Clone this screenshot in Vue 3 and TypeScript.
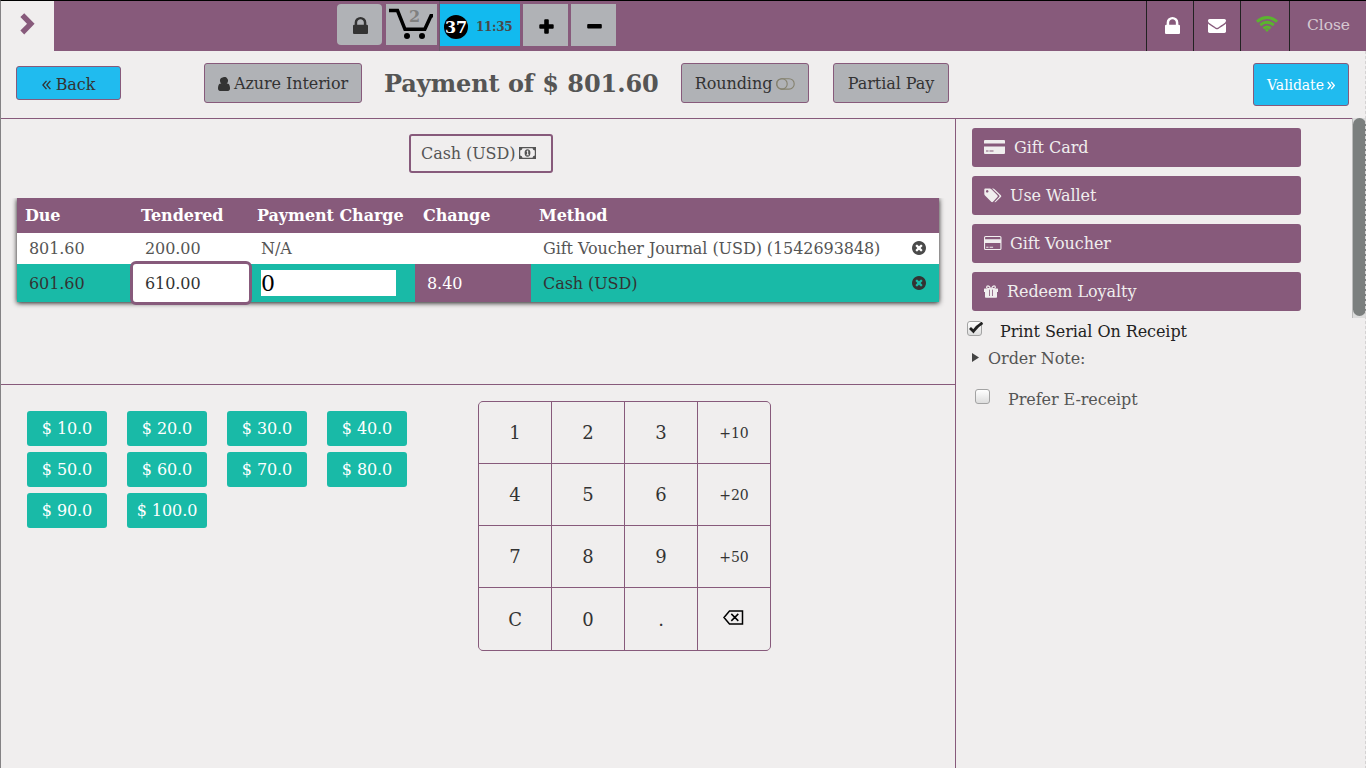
<script setup lang="ts">
const LOCK =
  'M640 768h512v-192q0-106-75-181t-181-75-181 75-75 181v192zm832 96v576q0 40-28 68t-68 28h-960q-40 0-68-28t-28-68v-576q0-40 28-68t68-28h32v-192q0-184 132-316t316-132 316 132 132 316v192h32q40 0 68 28t28 68z'
const CLOSE_CIRCLE =
  'M1277 1122q0-26-19-45l-181-181 181-181q19-19 19-45 0-27-19-46l-90-90q-19-19-46-19-26 0-45 19l-181 181-181-181q-19-19-45-19-27 0-46 19l-90 90q-19 19-19 46 0 26 19 45l181 181-181 181q-19 19-19 45 0 27 19 46l90 90q19 19 46 19 26 0 45-19l181-181 181 181q19 19 45 19 27 0 46-19l90-90q19-19 19-46zm387-226q0 209-103 385.5t-279.5 279.5-385.5 103-385.5-103-279.5-279.5-103-385.5 103-385.5 279.5-279.5 385.5-103 385.5 103 279.5 279.5 103 385.5z'

const amounts: string[] = ['10.0', '20.0', '30.0', '40.0', '50.0', '60.0', '70.0', '80.0', '90.0', '100.0']
const keys: string[] = ['1', '2', '3', '+10', '4', '5', '6', '+20', '7', '8', '9', '+50', 'C', '0', '.', 'del']
const headers: string[] = ['Due', 'Tendered', 'Payment Charge', 'Change', 'Method']
</script>

<template>
  <div class="pos">
    <header class="topbar">
      <div class="toggle">
        <svg width="15" height="22" viewBox="0 0 15 22"><path d="M2.300 2.100L10.800 10.800L2.300 19.500" fill="none" stroke="#875a7b" stroke-width="5.400" /></svg>
      </div>
      <div class="orders">
        <div class="tile lock">
          <svg width="15" height="17" viewBox="320 128 1152 1408" preserveAspectRatio="none"><path :d="LOCK" fill="#333" /></svg>
        </div>
        <div class="tile cart">
          <svg width="51" height="41" viewBox="0 0 51 41">
            <path d="M3 6.500H11.500L19 25.300H38.800L45 11.800H47" fill="none" stroke="#000" stroke-width="3.500" />
            <circle cx="21" cy="32" r="3" /><circle cx="36" cy="32" r="3" />
          </svg>
          <span class="cart-count">2</span>
        </div>
        <div class="tile current"><span class="badge">37</span><span class="time">11:35</span></div>
        <div class="tile op">
          <svg width="15" height="15" viewBox="0 0 15 15"><path d="M6.200 .2h2.600q1 0 1 1v4h3.900q1 0 1 1v2.600q0 1-1 1H9.800v4q0 1-1 1H6.200q-1 0-1-1v-4H1.300q-1 0-1-1V6.200q0-1 1-1h3.900v-4q0-1 1-1z" /></svg>
        </div>
        <div class="tile op minus">
          <svg width="15" height="15" viewBox="0 0 15 15"><rect x=".2" y="5" width="14.600" height="4.500" rx="1" /></svg>
        </div>
      </div>
      <div class="status">
        <div class="cell s1"><svg width="15" height="17" viewBox="320 128 1152 1408" preserveAspectRatio="none"><path :d="LOCK" fill="#fff" /></svg></div>
        <div class="cell s2"><svg width="18" height="14" viewBox="0 256 1792 1408" preserveAspectRatio="none"><path fill="#fff" d="M1792 710v794q0 66-47 113t-113 47h-1472q-66 0-113-47t-47-113v-794q44 49 101 87 362 246 497 345 57 42 92.500 65.500t94.500 48 110 24.500h2q51 0 110-24.500t94.500-48 92.500-65.500q170-123 498-345 57-39 100-87zm0-294q0 79-49 151t-122 123q-376 261-468 325-10 7-42.500 31t-54 38.500-52 32.500-57.500 27-50 9h-2q-23 0-50-9t-57.500-27-52-32.500-54-38.500-42.500-31q-91-64-262-182.500t-205-142.500q-62-42-117-115.500t-55-136.500q0-78 41.500-130t118.500-52h1472q65 0 112.500 47t47.500 113z" /></svg></div>
        <div class="cell s3">
          <svg width="22" height="16" viewBox="0 0 22 16" fill="none" stroke="#5bb42f" stroke-width="2.900">
            <path d="M.9 5.600Q11-2.600 21.100 5.600" /><path d="M4.200 9.200Q11 3.500 17.800 9.200" /><path d="M7.500 12.500Q11 9.500 14.500 12.500" />
            <path d="M8.900 13.700Q11 12.200 13.100 13.700L11 16z" fill="#5bb42f" stroke="none" />
          </svg>
        </div>
        <div class="cell s4">Close</div>
      </div>
    </header>

    <section class="titlebar">
      <button class="btn back">
        <svg width="9" height="10" viewBox="0 0 9 10"><path d="M4.500 .8L.9 5l3.600 4.200M8.400 .8L4.800 5l3.600 4.200" fill="none" stroke="#333" stroke-width="1.300" /></svg>
        <span>Back</span>
      </button>
      <button class="btn grey customer">
        <svg width="12" height="14" viewBox="256 128 1280 1536" preserveAspectRatio="none"><path fill="#333" d="M1536 1399q0 109-62.500 187t-150.500 78h-854q-88 0-150.500-78t-62.500-187q0-85 8.500-160.500t31.500-152 58.500-131 94-89 134.500-34.500q131 128 313 128t313-128q76 0 134.500 34.500t94 89 58.500 131 31.500 152 8.500 160.500zm-206-887q0 199-132.500 331.500t-301.500 132.500-301.500-132.500-132.500-331.500 132.500-271.500 301.500-112.500 301.500 112.500 132.500 271.500z" /></svg>
        <span>Azure Interior</span>
      </button>
      <h1>Payment of $ 801.60</h1>
      <button class="btn grey rounding">
        <span>Rounding</span>
        <svg width="19" height="12" viewBox="0 0 19 12" fill="none" stroke="#85826f" stroke-width="1.100"><rect x=".6" y=".7" width="17.600" height="10.400" rx="5.200" /><circle cx="6" cy="5.900" r="5.200" /></svg>
      </button>
      <button class="btn grey partial"><span>Partial Pay</span></button>
      <button class="btn validate">
        <span>Validate</span>
        <svg width="8" height="9" viewBox="0 0 8 9"><path d="M.7 .9L3.700 4.500.7 8.100M4.200 .9l3 3.600-3 3.600" fill="none" stroke="#fff" stroke-width="1.400" /></svg>
      </button>
    </section>

    <main class="body">
      <div class="left">
        <section class="payments">
          <button class="method">
            <span>Cash (USD)</span>
            <svg width="17" height="12" viewBox="0 0 17 12">
              <path fill="#555" fill-rule="evenodd" d="M0 0h17v12H0zM3.500 1.200Q3.300 3.200 1.200 3.400v5.200Q3.300 8.800 3.500 10.800h10Q13.700 8.800 15.800 8.600V3.400Q13.700 3.200 13.500 1.200z" />
              <ellipse cx="8.500" cy="6" rx="2.900" ry="3.700" fill="#555" />
              <path d="M7.300 4.500l1-1h.9v4h.8v.8H7.300v-.8h.8V4.800z" fill="#f0eeee" />
            </svg>
          </button>
          <div class="clip">
            <div class="table">
              <div class="row head"><span v-for="h in headers" :key="h">{{ h }}</span></div>
              <div class="row line">
                <span>801.60</span><span>200.00</span><span>N/A</span><span></span>
                <span class="name">Gift Voucher Journal (USD) (1542693848)
                  <svg width="14" height="14" viewBox="128 128 1536 1536"><path :d="CLOSE_CIRCLE" fill="#4a4a4a" /></svg>
                </span>
              </div>
              <div class="row line selected">
                <span>601.60</span><span class="edit">610.00</span>
                <span class="charge"><span class="field">0</span></span>
                <span class="change">8.40</span>
                <span class="name">Cash (USD)
                  <svg width="14" height="14" viewBox="128 128 1536 1536"><path :d="CLOSE_CIRCLE" fill="#333" /></svg>
                </span>
              </div>
            </div>
          </div>
        </section>
        <section class="entry">
          <div class="amounts"><button v-for="a in amounts" :key="a">$ {{ a }}</button></div>
          <div class="keypad">
            <button v-for="k in keys" :key="k" :class="{ small: k.startsWith('+') }">
              <svg v-if="k === 'del'" width="21" height="15" viewBox="0 0 21 15" fill="none" stroke="#000" stroke-width="1.500"><path d="M6.500 .9h13v13h-13L1 7.400zM8.300 3.900l7 7M15.300 3.900l-7 7" /></svg>
              <template v-else>{{ k }}</template>
            </button>
          </div>
        </section>
      </div>

      <aside class="right">
        <div class="actions">
          <button>
            <svg width="21" height="14" viewBox="0 0 21 14" fill="#f0eeee"><path d="M1 0h19q1 0 1 1v2.500H0V1q0-1 1-1z" /><path fill-rule="evenodd" d="M0 6.500h21V13q0 1-1 1H1q-1 0-1-1zM2 10.500v1h2.500v-1zM5.500 10.500v1h4v-1z" /></svg>
            <span class="g9">Gift Card</span>
          </button>
          <button>
            <svg width="18" height="15" viewBox="0 0 18 15" fill="#f0eeee"><path fill-rule="evenodd" d="M1.200.5h4.600q.9 0 1.600.7l6 6q.9.9 0 1.800L9 13.800q-.9.800-1.800 0L1 7.600Q.3 6.900.3 6V1.400Q.3.5 1.200.5zM3.200 2a1.300 1.300 0 1 0 .01 0z" /><path d="M8 .5h1q.9 0 1.600.7l6.300 6q.9.900 0 1.800l-4.900 4.800q-.8.700-1.500.1l4.600-4.800q.9-.9 0-1.800z" /></svg>
            <span class="g8">Use Wallet</span>
          </button>
          <button>
            <svg width="18" height="14" viewBox="0 0 18 14" fill="#f0eeee"><path fill-rule="evenodd" d="M1.500 0h14.500q1.500 0 1.500 1.500v11q0 1.500-1.500 1.500H1.500Q0 14 0 12.500v-11Q0 0 1.500 0zM1.100 1.600v1.700h15.300V1.600q0-.5-.5-.5H1.600q-.5 0-.5.5zM1.100 7v5.400q0 .5.5.5h14.300q.5 0 .5-.5V7z" /><path d="M2.200 10.700h2.300v1H2.200zM5.600 10.700h3.500v1H5.600z" /></svg>
            <span class="g8">Gift Voucher</span>
          </button>
          <button>
            <svg width="14" height="13" viewBox="0 0 14 13"><path fill="#f0eeee" fill-rule="evenodd" d="M.5 3.500h13q.5 0 .5.500v3h-1v5q0 .8-.8.800H1.800Q1 12.800 1 12V7H0V4q0-.5.500-.5zM5.200 4.500v6.500h.8v-6.500zM8 4.500v6.500h.8v-6.500z" /><path d="M6.800 3.700Q5.300.8 4 .8T2.600 2.200Q2.600 3.700 6.800 3.700M7.200 3.700Q8.700.8 10 .8t1.400 1.400q0 1.500-4.200 1.500" fill="none" stroke="#f0eeee" stroke-width="1.200" /></svg>
            <span class="g9">Redeem Loyalty</span>
          </button>
        </div>
        <label class="check serial">
          <span class="box"><svg width="16" height="14" viewBox="0 0 16 14"><path d="M2 6L5.400 9.300Q9 4 14.500 .9" fill="none" stroke="#222" stroke-width="2.800" /></svg></span>
          Print Serial On Receipt
        </label>
        <div class="note"><svg width="7" height="9" viewBox="0 0 7 9"><path d="M0 0l7 4.500L0 9z" fill="#444" /></svg>Order Note:</div>
        <label class="check prefer"><span class="box"></span>Prefer E-receipt</label>
        <div class="scroll"><div class="thumb"></div></div>
      </aside>
    </main>
  </div>
</template>

<style>
body { margin: 0; overflow: hidden; }
</style>

<style scoped>
.pos {
  box-sizing: border-box; width: 1366px; height: 768px; overflow: hidden;
  border-top: 1px solid #000; border-left: 1px solid #848284;
  background: #f0eeee; color: #555; display: flex; flex-direction: column;
  font: 16px/20px "DejaVu Serif", serif; letter-spacing: -.07px;
}
.pos *, .pos *::before { box-sizing: border-box; }
svg { display: block; flex: none; }
button { font: inherit; letter-spacing: inherit; color: inherit; padding: 0; margin: 0; border: 0; background: none; white-space: nowrap; }

.topbar { display: flex; height: 50px; flex: none; background: #875a7b; }
.toggle { width: 53px; background: #f0eeee; padding: 12px 0 0 19px; }
.orders { display: flex; margin-left: 283px; }
.tile { height: 41px; margin-top: 3px; background: #b0b2b6; display: flex; align-items: center; justify-content: center; }
.lock { width: 45px; border-radius: 4px; padding: 2px 0 0 1px; }
.cart { width: 51px; margin-left: 4px; position: relative; }
.cart-count { position: absolute; left: 23px; top: 3px; font-weight: bold; color: #808080; }
.current { width: 81px; height: 50px; margin: 0 0 0 2px; border: solid #875a7b; border-width: 3px 0 5px; background: #12baef; position: relative; justify-content: flex-start; }
.current::before { content: ""; position: absolute; left: 0; top: -3px; width: 1px; height: 50px; background: #6b5a6b; }
.badge { width: 24px; height: 24px; margin: 4px 0 0 5px; border-radius: 50%; background: #000; color: #fff; font-weight: bold; line-height: 25px; display: flex; justify-content: center; }
.time { margin: 3px 0 0 8px; font-size: 12px; letter-spacing: -.3px; font-weight: bold; color: #484848; }
.op { width: 45px; height: 42px; margin-left: 3px; padding: 2px 0 0 1px; }
.status { display: flex; margin-left: auto; }
.cell { border-left: 1px solid #222; }
.s1 { width: 47px; padding: 16px 0 0 18px; }
.s2 { width: 47px; padding: 18px 0 0 14px; }
.s3 { width: 49px; padding: 15px 0 0 15px; }
.s4 { width: 77px; padding: 14px 0 0 17px; color: #d5c8d1; font-size: 15.5px; }

.titlebar { height: 67px; flex: none; display: flex; align-items: flex-start; color: #333; }
.btn { display: flex; align-items: center; justify-content: center; border: 1px solid #875a7b; border-radius: 3px; height: 40px; margin-top: 12px; }
.back { width: 105px; height: 34px; margin: 15px 0 0 15px; background: #20bbef; gap: 5px; padding-top: 4px; }
.back svg { margin-top: -1px; }
.grey { background: #b0b2b6; padding-top: 2px; }
.customer { width: 158px; margin-left: 83px; gap: 4px; }
.customer svg { margin-top: -1px; }
h1 { margin: 17px 0 0 22px; width: 297px; font-size: 24px; line-height: 32px; color: #555; white-space: nowrap; }
.rounding { width: 128px; gap: 4px; }
.rounding svg { margin-top: -1px; }
.partial { width: 116px; margin-left: 24px; }
.validate { width: 96px; height: 43px; margin: 12px 17px 0 auto; background: #20bbef; color: #fff; font-size: 14px; gap: 3px; }
.validate svg { margin-top: 1px; }

.body { flex: 1; display: flex; min-height: 0; }
.left { width: 954px; border-top: 1px solid #875a7b; }
.payments { height: 266px; border-bottom: 1px solid #875a7b; display: flex; flex-direction: column; align-items: flex-start; }
.method { width: 144px; height: 39px; margin: 15px 0 0 408px; border: 2px solid #875a7b; border-radius: 3px; display: flex; align-items: center; padding-left: 10px; gap: 4px; }
.method svg { margin-top: -1px; }
.clip { width: 954px; height: 120px; margin-top: 25px; overflow: hidden; }
.table { width: 922px; margin-left: 16px; background: #fff; box-shadow: 0 1px 5px rgba(0, 0, 0, .9); }
.row { display: grid; grid-template-columns: 116px 116px 166px 116px 408px; align-items: stretch; }
.head { height: 35px; background: #875a7b; color: #fff; font-weight: bold; }
.head span { padding: 8px 0 0 8px; white-space: nowrap; }
.line { height: 31px; }
.line > span { display: flex; align-items: center; padding-left: 12px; }
.line.selected { height: 38px; background: #19baa7; color: #333; }
.selected > span { padding-top: 2px; }
.line .name { justify-content: space-between; padding-right: 13px; }
.line .name svg { margin: -1px 0 0; }
.selected .name svg { margin: -3px 0 0; }
.line .edit { position: relative; margin: -3px -3px -3px -3px; padding-left: 12px; border: 3px solid #875a7b; border-radius: 6px; background: #fff; }
.line .charge { padding-top: 0; }
.field { display: flex; align-items: center; width: 135px; height: 26px; padding-top: 2px; background: #fff; color: #000; font-size: 22px; line-height: 26px; }
.line .change { background: #875a7b; color: #fff; }

.entry { display: flex; }
.amounts { display: grid; grid-template-columns: repeat(4, 80px); grid-auto-rows: 35px; gap: 6px 20px; margin: 26px 0 0 26px; height: 120px; }
.amounts button { background: #19baa7; color: #fff; border-radius: 3px; }
.keypad { width: 293px; height: 250px; margin: 16px 0 0 71px; border: 1px solid #875a7b; border-radius: 5px; overflow: hidden; background: #875a7b; display: grid; grid-template-columns: repeat(4, 72px); grid-template-rows: 61px 61px 61px 62px; gap: 1px; }
.keypad button { background: #f0eeee; color: #333; font-size: 18px; display: flex; align-items: center; justify-content: center; padding-top: 1px; }
.keypad .small { font-size: 14px; padding-top: 0; }
.keypad svg { margin-top: -4px; margin-left: -2px; }

.right { width: 411px; border-left: 1px solid #875a7b; position: relative; }
.right::before { content: ""; position: absolute; left: 0; top: 0; width: 396px; height: 1px; background: #875a7b; }
.actions { display: flex; flex-direction: column; gap: 9px; margin: 10px 0 0 16px; width: 329px; }
.actions button { height: 39px; background: #875a7b; color: #f0eeee; border-radius: 3px; display: flex; align-items: center; padding-left: 12px; }
.actions svg { margin-top: -1px; }
.g9 { margin-left: 9px; }
.g8 { margin-left: 8px; }
.check { display: flex; align-items: center; height: 20px; }
.box { width: 15px; height: 15px; border: 1px solid #a3a3a3; border-radius: 3px; background: linear-gradient(#fff, #ddd); margin-top: -7px; }
.box svg { margin: 0; }
.serial { margin: 11px 0 0 11px; color: #222; gap: 18px; }
.note { display: flex; align-items: center; height: 20px; margin: 7px 0 0 16px; gap: 9px; }
.note svg { margin-top: -3px; }
.prefer { margin: 21px 0 0 19px; gap: 18px; }
.scroll { position: absolute; left: 396px; top: 0; width: 14px; height: 200px; border-left: 1px solid #bbb; background: #dcdcdc; }
.thumb { width: 13px; height: 198px; border-radius: 7px; background: #7b7f7e; }
.right::after { content: ""; position: absolute; right: 0; top: -67px; height: 718px; border-right: 1px dashed #d5d3d3; }
</style>
